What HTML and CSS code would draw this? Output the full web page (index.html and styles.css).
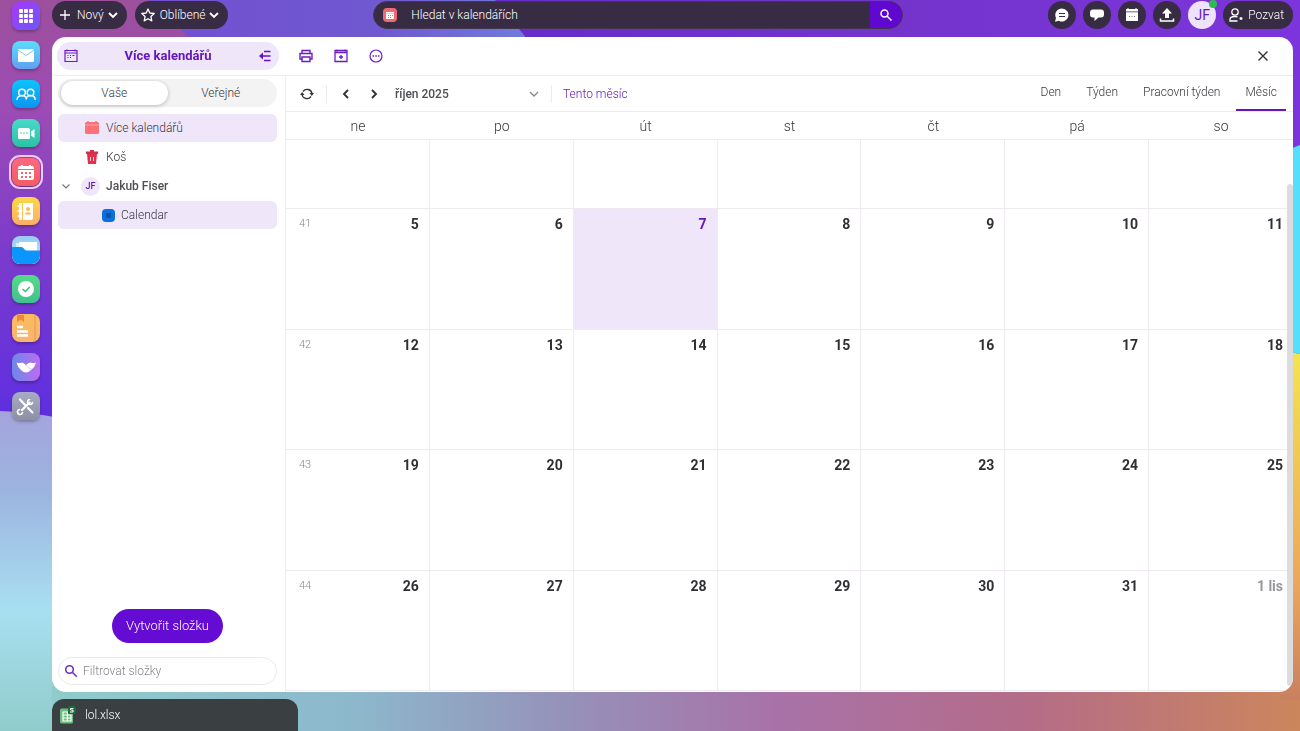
FILE: index.html
```
<!DOCTYPE html>
<html lang="cs">
<head>
    <meta charset="UTF-8">
    <meta name="viewport" content="width=device-width, initial-scale=1.0">
    <title>Kalendář</title>
    <link rel="stylesheet" href="styles.css">
</head>
<body>
    <!-- Wallpaper -->
    <svg class="wallpaper" viewBox="0 0 1300 731" preserveAspectRatio="none" aria-hidden="true">
        <defs>
            <linearGradient id="wpLeft" x1="0" y1="0" x2="0" y2="1">
                <stop offset="0" stop-color="#9c509c"/>
                <stop offset="0.25" stop-color="#9c4cb4"/>
                <stop offset="0.6" stop-color="#7a3acc"/>
                <stop offset="1" stop-color="#5c2ee2"/>
            </linearGradient>
            <linearGradient id="wpBlue" x1="0" y1="0" x2="1" y2="0">
                <stop offset="0" stop-color="#7350d0"/>
                <stop offset="0.6" stop-color="#6f58d0"/>
                <stop offset="1" stop-color="#6f7cdc"/>
            </linearGradient>
            <linearGradient id="wpTop" x1="0" y1="0" x2="1" y2="0">
                <stop offset="0" stop-color="#662cc8"/>
                <stop offset="0.5" stop-color="#7434cc"/>
                <stop offset="1" stop-color="#7c34dc"/>
            </linearGradient>
            <linearGradient id="wpLow" x1="0" y1="0" x2="0" y2="1">
                <stop offset="0" stop-color="#a4a4dc"/>
                <stop offset="0.25" stop-color="#9cb4e0"/>
                <stop offset="0.62" stop-color="#a8dff0"/>
                <stop offset="1" stop-color="#90cccb"/>
            </linearGradient>
            <linearGradient id="wpBottom" x1="0" y1="0" x2="1" y2="0">
                <stop offset="0" stop-color="#90cccb"/>
                <stop offset="0.24" stop-color="#8cb8cc"/>
                <stop offset="0.42" stop-color="#9690b8"/>
                <stop offset="0.58" stop-color="#a872a8"/>
                <stop offset="0.78" stop-color="#b46c88"/>
                <stop offset="1" stop-color="#cc865c"/>
            </linearGradient>
            <linearGradient id="wpRight" x1="0" y1="0" x2="0" y2="1">
                <stop offset="0" stop-color="#f4e450"/>
                <stop offset="0.65" stop-color="#eca85c"/>
                <stop offset="1" stop-color="#c88060"/>
            </linearGradient>
        </defs>
        <rect width="1300" height="430" fill="url(#wpLeft)"/>
        <path d="M148 0H500L530 40H192Z" fill="url(#wpBlue)"/>
        <path d="M495 0H1300V160H600L528 40Z" fill="url(#wpTop)"/>
        <path d="M0 411Q30 412 60 418V731H0Z" fill="url(#wpLow)"/>
        <rect x="52" y="680" width="1248" height="51" fill="url(#wpBottom)"/>
        <path d="M1280 153L1300 145V354L1280 350Z" fill="#54e0fc"/>
        <path d="M1280 350L1300 354V700L1293 700H1280Z" fill="url(#wpRight)"/>
    </svg>

    <div class="desktop">
        <!-- App rail -->
        <nav class="rail">
            <a class="app app-grid" href="#" aria-label="Aplikace">
                <svg viewBox="0 0 28 28"><g fill="#fff"><rect x="7" y="7" width="4" height="4" rx="1"/><rect x="12" y="7" width="4" height="4" rx="1"/><rect x="17" y="7" width="4" height="4" rx="1"/><rect x="7" y="12" width="4" height="4" rx="1"/><rect x="12" y="12" width="4" height="4" rx="1"/><rect x="17" y="12" width="4" height="4" rx="1"/><rect x="7" y="17" width="4" height="4" rx="1"/><rect x="12" y="17" width="4" height="4" rx="1"/><rect x="17" y="17" width="4" height="4" rx="1"/></g></svg>
            </a>
            <a class="app app-mail" href="#" aria-label="E-mail">
                <svg viewBox="0 0 28 28"><rect x="6" y="8" width="16" height="13" rx="1" fill="#fff"/><path d="M6 9l8 5.500 8-5.500" fill="none" stroke="#7cc4f4" stroke-width="1"/></svg>
            </a>
            <a class="app app-people" href="#" aria-label="Týmy">
                <svg viewBox="0 0 28 28" fill="none" stroke="#fff" stroke-width="1.400"><circle cx="10" cy="12.500" r="3.300"/><circle cx="18.500" cy="12.500" r="3.300"/><path d="M5 20c0-3 2-4.500 5-4.500s4.300 1.500 4.300 4c0-2.500 1.500-4 4.200-4 3 0 4.700 1.500 4.700 4.500"/></svg>
            </a>
            <a class="app app-meet" href="#" aria-label="Schůzky">
                <svg viewBox="0 0 28 28" fill="#fff"><rect x="6" y="9" width="12" height="11" rx="1.500"/><path d="M19 12.500l3.500-2.500v9L19 16.500z"/><g fill="#34cdb4"><circle cx="9" cy="14" r=".8"/><circle cx="12" cy="14" r=".8"/><circle cx="15" cy="14" r=".8"/></g></svg>
            </a>
            <a class="app app-calendar active" href="#" aria-label="Kalendář">
                <svg viewBox="0 0 28 28"><path d="M6 10a2 2 0 0 1 2-2h1V7h2v1h6V7h2v1h1a2 2 0 0 1 2 2v1H6zM6 12h16v8a2 2 0 0 1-2 2H8a2 2 0 0 1-2-2z" fill="#fff"/><g fill="#f8606c"><rect x="9" y="14" width="2" height="2"/><rect x="13" y="14" width="2" height="2"/><rect x="17" y="14" width="2" height="2"/><rect x="9" y="18" width="2" height="2"/><rect x="13" y="18" width="2" height="2"/><rect x="17" y="18" width="2" height="2"/></g></svg>
            </a>
            <a class="app app-contacts" href="#" aria-label="Kontakty">
                <svg viewBox="0 0 28 28"><path d="M7 6h3v17H7z" fill="#fff"/><path d="M11 6h10v15a2 2 0 0 1-2 2h-8z" fill="#fff"/><path d="M5.500 9h3M5.500 14h3M5.500 19h3" stroke="#fff" stroke-width="1.300"/><g fill="#f8bc4c"><circle cx="16" cy="12" r="2"/><path d="M13 17.500c0-3 6-3 6 0z"/></g></svg>
            </a>
            <a class="app app-files" href="#" aria-label="Soubory">
                <svg viewBox="0 0 28 28"><path d="M4 7h20v9H4z" fill="#d8f0fc"/><path d="M7 6h18v9H7z" fill="#fff"/><path d="M0 11h9c3 0 3 3.500 6 3.500h13V20a8 8 0 0 1-8 8H8a8 8 0 0 1-8-8z" fill="#0c96fc"/></svg>
            </a>
            <a class="app app-tasks" href="#" aria-label="Úkoly">
                <svg viewBox="0 0 28 28"><circle cx="14" cy="14" r="8" fill="#fff"/><path d="M10.500 14l2.800 2.500 4.500-4.500" fill="none" stroke="#40bc84" stroke-width="1.600"/></svg>
            </a>
            <a class="app app-notes" href="#" aria-label="Poznámky">
                <svg viewBox="0 0 28 28"><path d="M23 0v28" stroke="#e89848" stroke-width="1"/><path d="M5 1h7v7l-3.500-2.500L5 8z" fill="#ee8838"/><path d="M5 13h6M5 17.500h11M5 21.500h11" stroke="#fff" stroke-width="2.400"/></svg>
            </a>
            <a class="app app-link" href="#" aria-label="Asistent">
                <svg viewBox="0 0 28 28"><path d="M4.500 9.500q3 1 5.500 0 2.500.5 4 2.500 2-2.500 4.500-2.500 2.500 1 5.500 0-1 4.500-4.500 7Q17 19.500 14 19.500t-5.500-3Q5.500 14 4.500 9.500z" fill="#fff"/><path d="M14 12q2 3.500 5.500 4" fill="none" stroke="#d8ccf4" stroke-width="1"/></svg>
            </a>
            <a class="app app-settings" href="#" aria-label="Nastavení">
                <svg viewBox="0 0 28 28" fill="none" stroke="#fff" stroke-linecap="round"><path d="M8 7.500l5 5.500M16 16l4.500 4.500" stroke-width="2.200"/><path d="M17.500 10.500L10 18" stroke-width="2.400"/><path d="M20.500 10.500a2.500 2.500 0 1 1-3-3M7.500 17.500a2.500 2.500 0 1 0 3 3" stroke-width="1.600"/></svg>
            </a>
        </nav>

        <div class="workspace">
            <!-- Top bar -->
            <header class="topbar">
                <div class="top-left">
                    <button class="pill" type="button">
                        <svg class="ico16" viewBox="0 0 16 16" fill="none" stroke="#fff" stroke-width="1.300"><path d="M8 3v10M3 8h10"/></svg>
                        Nový
                        <svg class="ico10" viewBox="0 0 10 10" fill="none" stroke="#fff" stroke-width="1.900"><path d="M1 3l4 4 4-4"/></svg>
                    </button>
                    <button class="pill" type="button">
                        <svg class="ico16" viewBox="0 0 16 16" fill="none" stroke="#fff" stroke-width="1.300" stroke-linejoin="round"><path d="M8 2l1.800 4 4.400.500-3.300 3 .900 4.400L8 11.700l-3.800 2.200.900-4.400-3.300-3 4.400-.500z"/></svg>
                        Oblíbené
                        <svg class="ico10" viewBox="0 0 10 10" fill="none" stroke="#fff" stroke-width="1.900"><path d="M1 3l4 4 4-4"/></svg>
                    </button>
                </div>

                <form class="search">
                    <svg class="search-app" viewBox="0 0 14 14"><rect width="14" height="14" rx="4" fill="#ee6a70"/><path d="M3 4h8v7H3z" fill="#fff"/><path d="M3 5.500h8" stroke="#f4a0a4" stroke-width=".6"/><path d="M5 7.500h1M7 7.500h1M9 7.500h1M5 9.500h1M7 9.500h1" stroke="#ee6a70" stroke-width="1"/></svg>
                    <input type="text" placeholder="Hledat v kalendářích" aria-label="Hledat v kalendářích">
                    <button type="submit" aria-label="Hledat">
                        <svg class="ico16" viewBox="0 0 16 16" fill="none" stroke="#fff" stroke-width="1.500"><circle cx="6.500" cy="6.500" r="3.500"/><path d="M9 9l4.500 4.500"/></svg>
                    </button>
                </form>

                <div class="top-right">
                    <button class="round" type="button" aria-label="Chat">
                        <svg class="ico16" viewBox="0 0 16 16"><path d="M8 1.500a6.500 6.500 0 1 1-3.200 12.200L1 14.800l1-3.800A6.500 6.500 0 0 1 8 1.500z" fill="#fff"/><path d="M5 6.500h6M5 9.500h6" stroke="#3a2c48" stroke-width="1"/></svg>
                    </button>
                    <button class="round" type="button" aria-label="Zprávy">
                        <svg class="ico16" viewBox="0 0 16 16"><path d="M4 2.500h8a3 3 0 0 1 3 3v2a3 3 0 0 1-3 3H9.500L5.500 14v-3.500H4a3 3 0 0 1-3-3v-2a3 3 0 0 1 3-3z" fill="#fff"/></svg>
                    </button>
                    <button class="round" type="button" aria-label="Události">
                        <svg class="ico16" viewBox="0 0 16 16"><path d="M2 2h12v2.500H2zM2 5.200h12V14H2z" fill="#fff"/><path d="M4 1v2M12 1v2" stroke="#fff"/><path d="M5 9.500h1M7.500 9.500h1M10 9.500h1" stroke="#76708a" stroke-width="1"/></svg>
                    </button>
                    <button class="round" type="button" aria-label="Nahrát">
                        <svg class="ico16" viewBox="0 0 16 16"><path d="M8 1l5 5.500h-3V11H6V6.500H3z" fill="#fff"/><path d="M1.500 11.500V14h13v-2.500" fill="none" stroke="#fff" stroke-width="1.500"/></svg>
                    </button>
                    <button class="avatar" type="button" aria-label="Profil">JF<span class="status"></span></button>
                    <button class="pill invite" type="button">
                        <svg class="ico16" viewBox="0 0 16 16" fill="none" stroke="#fff" stroke-width="1.300"><circle cx="7" cy="5" r="3.200"/><path d="M9.500 14H2v-1.500c0-2 2-3 5-3 1 0 1.800.100 2.500.400M11.500 11.500h3M13 10v3"/></svg>
                        Pozvat
                    </button>
                </div>
            </header>

            <!-- Calendar window -->
            <main class="window">
                <div class="window-head">
                    <div class="folder-title">
                        <svg class="ico16" viewBox="0 0 16 16" fill="none" stroke="#6a1cc0" stroke-width="1.200"><path d="M2 2.500h12v11H2zM2 5h12M4 1.500v2M12 1.500v2"/><path d="M4.500 9.500h1M4.500 7.500h1M7 7.500h1M7 9.500h1M9.500 7.500h2"/></svg>
                        <h1>Více kalendářů</h1>
                        <button class="bare" type="button" aria-label="Skrýt panel">
                            <svg class="ico16" viewBox="0 0 16 16" fill="none" stroke="#6412c8" stroke-width="1.600"><path d="M7 3.500h6.500M4 8h9.500M7 12.500h6.500"/><path d="M6 4.500L2 8l4 3.500z" fill="#6412c8" stroke="none"/></svg>
                        </button>
                    </div>
                    <div class="actions">
                        <button class="bare" type="button" aria-label="Tisk">
                            <svg class="ico16" viewBox="0 0 16 16" fill="none" stroke="#6a1cc0" stroke-width="1.400"><path d="M4 5V2.500h8V5M4 11H2V5.500h12V11h-2M4 9h8v4.500H4z"/></svg>
                        </button>
                        <button class="bare" type="button" aria-label="Nová událost">
                            <svg class="ico16" viewBox="0 0 16 16" fill="none" stroke="#6a1cc0" stroke-width="1.300"><path d="M2 2.500h12v11H2zM2 4.500h12M4 1.500v2M12 1.500v2M8 7v4M6 9h4"/></svg>
                        </button>
                        <button class="bare" type="button" aria-label="Další">
                            <svg class="ico16" viewBox="0 0 16 16" fill="none" stroke="#6a1cc0" stroke-width="1.200"><circle cx="8" cy="8" r="6"/><path d="M4.500 8H6M7.300 8h1.500M10 8h1.500" stroke-width="1.600"/></svg>
                        </button>
                    </div>
                    <button class="bare close" type="button" aria-label="Zavřít">
                        <svg class="ico16" viewBox="0 0 16 16" fill="none" stroke="#333" stroke-width="1.400"><path d="M3.500 3.500l9 9M12.500 3.500l-9 9"/></svg>
                    </button>
                </div>

                <div class="window-body">
                    <aside class="sidebar">
                        <div class="switch">
                            <button class="selected" type="button">Vaše</button>
                            <button type="button">Veřejné</button>
                        </div>
                        <ul class="folders">
                            <li><a class="folder selected" href="#">
                                <svg class="ico16" viewBox="0 0 16 16"><rect x="1" y="2" width="14" height="12" rx="1.500" fill="#fc7078"/><path d="M1 5h14" stroke="#fca4a8" stroke-width="1"/><path d="M4 1v2M12 1v2" stroke="#fc7078" stroke-width="1.500"/></svg>
                                Více kalendářů</a></li>
                            <li><a class="folder" href="#">
                                <svg class="ico16" viewBox="0 0 16 16"><path d="M3 4.500h10L12 15H4z" fill="#e0304c"/><path d="M2 2.500h12v2.500H2zM6 1h4v2H6z" fill="#d4304c"/><path d="M6.500 8v4M9.500 8v4" stroke="#fcd0d8" stroke-width="1"/></svg>
                                Koš</a></li>
                            <li><a class="folder owner" href="#">
                                <svg class="ico10" viewBox="0 0 10 10" fill="none" stroke="#777" stroke-width="1.200"><path d="M1.500 3.500L5 7l3.500-3.500"/></svg>
                                <span class="initials">JF</span>
                                Jakub Fiser</a></li>
                            <li><a class="folder child selected" href="#">
                                <span class="swatch"></span>
                                Calendar</a></li>
                        </ul>
                        <button class="create" type="button">Vytvořit složku</button>
                        <label class="filter">
                            <svg class="ico16" viewBox="0 0 16 16" fill="none" stroke="#7030c8" stroke-width="1.600"><circle cx="6.500" cy="6.500" r="3.800"/><path d="M9.300 9.300l4.500 4.500"/></svg>
                            <input type="text" placeholder="Filtrovat složky" aria-label="Filtrovat složky">
                        </label>
                    </aside>

                    <section class="calendar">
                        <div class="toolbar">
                            <button class="bare refresh" type="button" aria-label="Obnovit">
                                <svg class="ico16" viewBox="0 0 16 16" fill="none" stroke="#333" stroke-width="1.300"><path d="M4 5.500a5 5 0 0 1 9 2M12 10.500a5 5 0 0 1-9-2"/><path d="M10.500 7H15l-2.200 3zM5.500 9H1l2.200-3z" fill="#333" stroke="none"/></svg>
                            </button>
                            <span class="divider"></span>
                            <div class="stepper">
                                <button class="bare" type="button" aria-label="Předchozí">
                                    <svg class="ico16" viewBox="0 0 16 16" fill="none" stroke="#333" stroke-width="1.900"><path d="M10 4L6 8l4 4"/></svg>
                                </button>
                                <button class="bare" type="button" aria-label="Následující">
                                    <svg class="ico16" viewBox="0 0 16 16" fill="none" stroke="#333" stroke-width="1.900"><path d="M6 4l4 4-4 4"/></svg>
                                </button>
                            </div>
                            <div class="month">
                                <select aria-label="Měsíc"><option>říjen 2025</option></select>
                                <svg class="ico10" viewBox="0 0 10 10" fill="none" stroke="#888" stroke-width="1.300"><path d="M1 3l4 4 4-4"/></svg>
                            </div>
                            <span class="divider"></span>
                            <button class="this-month" type="button">Tento měsíc</button>
                            <div class="views">
                                <button type="button">Den</button>
                                <button type="button">Týden</button>
                                <button type="button">Pracovní týden</button>
                                <button class="selected" type="button">Měsíc</button>
                            </div>
                        </div>
                        <div class="month-view">
                            <table>
                                <thead>
                                    <tr><th>ne</th><th>po</th><th>út</th><th>st</th><th>čt</th><th>pá</th><th>so</th></tr>
                                </thead>
                                <tbody>
                                    <tr class="cut"><td></td><td></td><td></td><td></td><td></td><td></td><td></td></tr>
                                    <tr><td><span class="week">41</span>5</td><td>6</td><td class="today">7</td><td>8</td><td>9</td><td>10</td><td>11</td></tr>
                                    <tr><td><span class="week">42</span>12</td><td>13</td><td>14</td><td>15</td><td>16</td><td>17</td><td>18</td></tr>
                                    <tr><td><span class="week">43</span>19</td><td>20</td><td>21</td><td>22</td><td>23</td><td>24</td><td>25</td></tr>
                                    <tr><td><span class="week">44</span>26</td><td>27</td><td>28</td><td>29</td><td>30</td><td>31</td><td class="other">1 lis</td></tr>
                                </tbody>
                            </table>
                            <span class="scroll-thumb"></span>
                        </div>
                    </section>
                </div>
            </main>

            <!-- Open documents -->
            <footer class="taskbar">
                <a class="task" href="#">
                    <svg class="ico18" viewBox="0 0 18 18"><path d="M2 4a1.500 1.500 0 0 1 1.500-1.500H10V8h5v8a1.500 1.500 0 0 1-1.500 1.500h-10A1.500 1.500 0 0 1 2 16z" fill="#6cbc80"/><path d="M5 6h4.500v3H13v6H5zM5 9h5M5 12h8M9.500 6v9" fill="none" stroke="#fff" stroke-width="1.200"/><rect x="10" y="0" width="8" height="8" rx="2" fill="#1c6c40"/><path d="M15.500 2.500h-3v1.500h2.500v2h-3" fill="none" stroke="#fff" stroke-width="1"/></svg>
                    lol.xlsx
                </a>
            </footer>
        </div>
    </div>
</body>
</html>
```
FILE: styles.css
```
:root {
    --purple: #640cd4;
    --purple-text: #6418bc;
    --lavender: #efe6fa;
    --dark: #382c44;
    --line: #eeeaf0;
    --text: #38383e;
    --font-family: Roboto, "Noto Sans", sans-serif;
}

* {
    box-sizing: border-box;
}

body {
    margin: 0;
    color: var(--text);
    font-family: var(--font-family);
    font-size: 12px;
    font-weight: 300;
    line-height: 16px;
    overflow: hidden;
}

button,
input,
select {
    font: inherit;
    color: inherit;
    border: none;
    background: none;
    padding: 0;
    margin: 0;
    outline: none;
}

button {
    cursor: pointer;
}

a {
    color: inherit;
    text-decoration: none;
}

svg {
    display: block;
    flex-shrink: 0;
}

.ico10 {
    width: 10px;
    height: 10px;
}

.ico16 {
    width: 16px;
    height: 16px;
}

.ico18 {
    width: 18px;
    height: 18px;
}

.wallpaper {
    position: fixed;
    top: 0;
    left: 0;
    width: 100%;
    height: 100%;
    z-index: -1;
}

.desktop {
    display: flex;
    height: 100vh;
}

/* App rail */
.rail {
    width: 52px;
    flex-shrink: 0;
    display: flex;
    flex-direction: column;
    align-items: center;
    gap: 11px;
    padding-top: 2px;
}

.app {
    width: 28px;
    height: 28px;
    flex-shrink: 0;
    border-radius: 8px;
    box-shadow: 0 2px 3px rgba(0, 0, 0, 0.25);
    overflow: hidden;
}

.app-grid { background: linear-gradient(135deg, #a838fc, #6c58f8); }
.app-mail { background: linear-gradient(#5cdcf8, #60a0f4); }
.app-people { background: linear-gradient(#0cc4fc, #0c94f0); }
.app-meet { background: linear-gradient(#48dcc8, #2cc0a4); }
.app-calendar { background: linear-gradient(#fc6880, #f45c60); }
.app-contacts { background: linear-gradient(#fcd844, #fcae68); }
.app-files { background: linear-gradient(#98ccf4, #b8e4fc); }
.app-tasks { background: linear-gradient(#54dc84, #40c090); }
.app-notes { background: linear-gradient(#fcbc5c, #f8b470); }
.app-link { background: linear-gradient(90deg, #6c88e8, #bc6cf0); }
.app-settings { background: linear-gradient(#a8acc4, #8c90a0); }

.app.active {
    outline: 2px solid rgba(255, 225, 250, 0.85);
    outline-offset: 1px;
}

/* Top bar */
.workspace {
    flex: 1;
    min-width: 0;
    display: flex;
    flex-direction: column;
    padding-right: 7px;
}

.topbar {
    height: 37px;
    flex-shrink: 0;
    display: flex;
    justify-content: space-between;
    padding-top: 1px;
}

.top-left,
.top-right {
    display: flex;
    gap: 8px;
}

.top-right {
    gap: 7px;
}

.pill {
    display: flex;
    align-items: center;
    gap: 4px;
    height: 28px;
    padding: 0 9px 0 5px;
    border-radius: 14px;
    background: var(--dark);
    color: #fff;
}

.search {
    flex: 0 1 530px;
    height: 28px;
    display: flex;
    align-items: center;
    border-radius: 14px;
    background: var(--dark);
    border: 1px solid #44364e;
    overflow: hidden;
}

.search-app {
    width: 14px;
    height: 14px;
    margin: 0 14px 0 9px;
}

.search input {
    flex: 1;
    min-width: 0;
    color: #fff;
}

.search input::placeholder {
    color: #fff;
    opacity: 1;
}

.search button {
    align-self: stretch;
    width: 32px;
    background: #6008d0;
    display: flex;
    align-items: center;
    justify-content: center;
}

.round,
.avatar {
    width: 28px;
    height: 28px;
    border-radius: 50%;
    background: var(--dark);
    display: flex;
    align-items: center;
    justify-content: center;
}

.avatar {
    position: relative;
    background: #efe2fc;
    color: var(--purple-text);
    font-size: 14px;
    font-weight: 400;
}

.status {
    position: absolute;
    top: -1px;
    right: -1px;
    width: 8px;
    height: 8px;
    border-radius: 50%;
    background: #2cbc50;
}

/* Calendar window */
.window {
    flex: 1;
    min-height: 0;
    display: flex;
    flex-direction: column;
    background: #fff;
    border-radius: 14px;
    overflow: hidden;
}

.bare {
    display: flex;
    align-items: center;
    justify-content: center;
}

.window-head {
    height: 39px;
    flex-shrink: 0;
    display: flex;
    align-items: center;
    padding: 0 22px 0 5px;
    border-bottom: 1px solid var(--line);
}

.folder-title {
    width: 222px;
    height: 28px;
    display: flex;
    align-items: center;
    padding: 0 6px;
    border-radius: 14px;
    background: var(--lavender);
}

.folder-title h1 {
    flex: 1;
    margin: 0;
    text-align: center;
    font-size: 13px;
    font-weight: 700;
    color: var(--purple-text);
}

.actions {
    flex: 1;
    display: flex;
    gap: 19px;
    padding-left: 19px;
}

.window-body {
    flex: 1;
    min-height: 0;
    display: flex;
}

/* Sidebar */
.sidebar {
    width: 234px;
    flex-shrink: 0;
    display: flex;
    flex-direction: column;
    padding: 3px 8px 7px 6px;
    border-right: 1px solid var(--line);
}

.switch {
    display: flex;
    height: 28px;
    padding: 2px 3px;
    border-radius: 14px;
    background: #f4f3f4;
}

.switch button {
    flex: 1;
    border-radius: 12px;
}

.switch .selected {
    background: #fff;
    box-shadow: 0 1px 4px rgba(0, 0, 0, 0.25);
}

.folders {
    flex: 1;
    list-style: none;
    margin: 0;
    padding: 7px 0 0;
}

.folders li {
    margin-bottom: 1px;
}

.folder {
    display: flex;
    align-items: center;
    gap: 6px;
    height: 28px;
    padding-left: 26px;
    border-radius: 6px;
}

.folder.selected {
    background: var(--lavender);
}

.folder.owner {
    padding-left: 3px;
    color: #4e4e54;
    font-weight: 500;
}

.owner .ico10 {
    margin-right: 4px;
}

.folder.child {
    padding-left: 44px;
}

.initials {
    width: 19px;
    height: 19px;
    border-radius: 50%;
    background: var(--lavender);
    color: var(--purple-text);
    font-size: 9px;
    line-height: 19px;
    text-align: center;
}

.swatch {
    width: 13px;
    height: 13px;
    border-radius: 4px;
    border: 4px solid #0c70dc;
    background: #0854b0;
}

.create {
    align-self: center;
    height: 34px;
    padding: 0 14px;
    margin-bottom: 14px;
    border-radius: 17px;
    background: var(--purple);
    color: #fff;
    font-size: 13px;
}

.filter {
    display: flex;
    align-items: center;
    gap: 4px;
    height: 28px;
    padding: 0 4px;
    border: 1px solid #ebe7ef;
    border-radius: 14px;
}

.filter input {
    flex: 1;
    min-width: 0;
}

.filter input::placeholder {
    color: #86848a;
    opacity: 1;
}

/* Toolbar */
.calendar {
    flex: 1;
    min-width: 0;
    display: flex;
    flex-direction: column;
}

.toolbar {
    height: 36px;
    flex-shrink: 0;
    display: flex;
    align-items: center;
    padding: 0 7px 0 13px;
    border-bottom: 1px solid var(--line);
}

.divider {
    width: 1px;
    height: 18px;
    margin: 0 11px;
    background: var(--line);
}

.stepper {
    display: flex;
    gap: 12px;
    margin-right: 13px;
}

.month {
    position: relative;
    width: 145px;
}

.month select {
    appearance: none;
    width: 100%;
    color: #4e4e54;
    font-weight: 500;
}

.month svg {
    position: absolute;
    top: 3px;
    right: 1px;
    pointer-events: none;
}

.this-month {
    color: #6418bc;
}

.views {
    align-self: stretch;
    display: flex;
    gap: 7px;
    margin-left: auto;
}

.views button {
    padding: 0 9px 1px;
    border-bottom: 2px solid transparent;
}

.views .selected {
    border-bottom-color: #6418bc;
}

/* Month grid */
.month-view {
    position: relative;
    flex: 1;
    min-height: 0;
    padding-bottom: 1px;
}

table {
    width: 100%;
    height: 100%;
    table-layout: fixed;
    border-collapse: separate;
    border-spacing: 0;
}

th {
    height: 28px;
    padding: 0;
    border-bottom: 1px solid var(--line);
    font-size: 14px;
    font-weight: 300;
}

td {
    padding: 6px 10px 0 13px;
    border-right: 1px solid var(--line);
    border-bottom: 1px solid var(--line);
    vertical-align: top;
    text-align: right;
    font-size: 14px;
    line-height: 18px;
    font-weight: 700;
    color: #303034;
}

td:last-child {
    border-right: none;
}

.cut td {
    height: 69px;
}

.week {
    float: left;
    font-size: 11px;
    font-weight: 300;
    color: #8a888e;
}

.today {
    background: var(--lavender);
    color: var(--purple-text);
}

.other {
    color: #98969c;
}

.scroll-thumb {
    position: absolute;
    top: 72px;
    right: 0;
    bottom: 6px;
    width: 6px;
    border-radius: 3px;
    background: #dcdcde;
}

/* Open documents */
.taskbar {
    height: 39px;
    flex-shrink: 0;
    display: flex;
    padding-top: 7px;
}

.task {
    width: 246px;
    display: flex;
    align-items: center;
    gap: 9px;
    padding: 0 6px;
    border-radius: 12px 12px 0 0;
    background: #3a4042;
    color: #fff;
}
```
